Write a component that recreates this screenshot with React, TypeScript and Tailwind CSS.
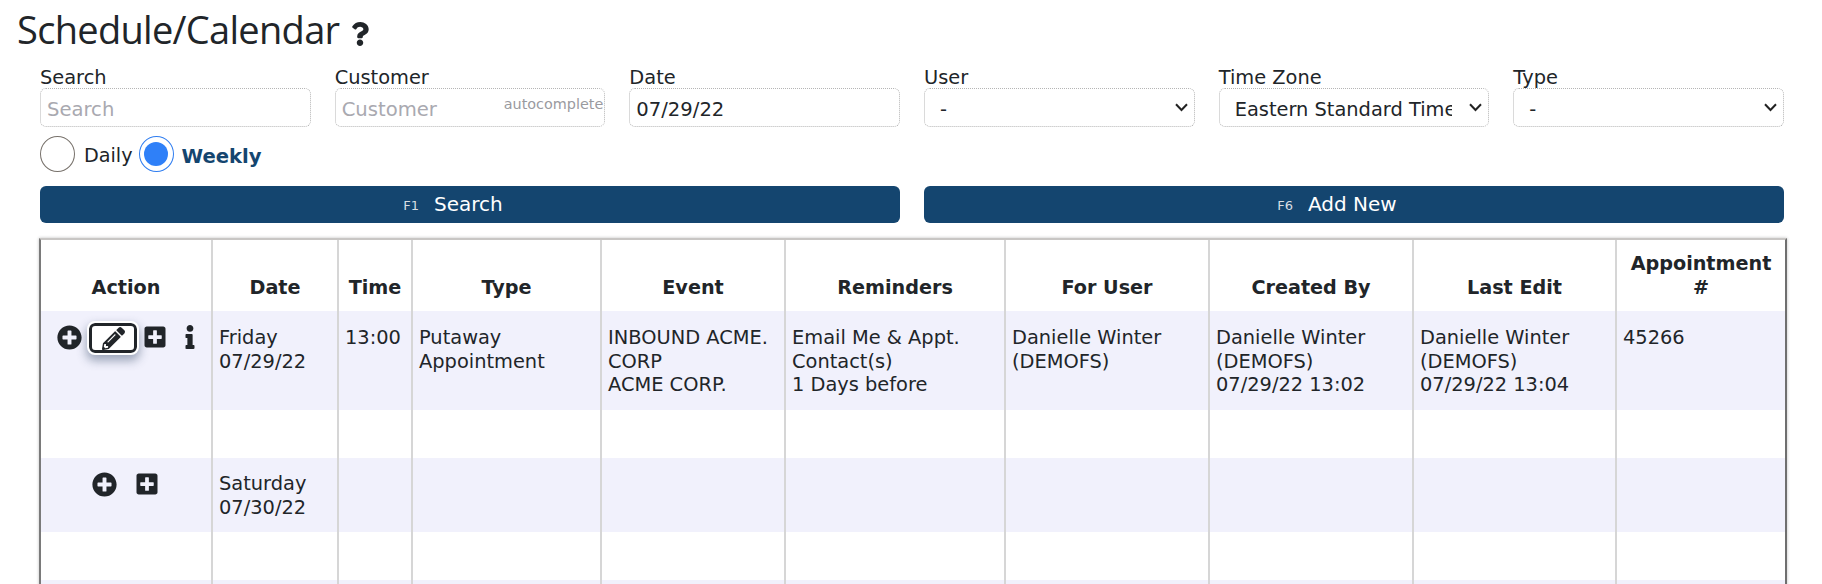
import React from "react";
import { FaQuestion, FaPlusCircle, FaPlusSquare, FaInfo, FaPencilAlt } from "react-icons/fa";

const colWidths = [170, 126, 74, 189, 184, 220, 204, 204, 203, 170];
const headers: React.ReactNode[] = [
  "Action", "Date", "Time", "Type", "Event", "Reminders", "For User", "Created By", "Last Edit",
  <>Appointment<br />#</>,
];

const Field = ({ label, children }: { label: string; children: React.ReactNode }) => (
  <div className="flex flex-col">
    <label className="text-[19.4px] leading-[25px] h-[23px] text-[#212529]">{label}</label>
    {children}
  </div>
);

const boxCls = "h-[39px] w-full rounded-[6px] border border-dotted border-[#b5b5b5] bg-white pl-[6px] pr-[5px] pt-[3px] text-[19.6px] text-[#212529] placeholder:text-[#a9a9b0] outline-none";

const Sel = ({ value }: { value: string }) => (
  <div className="relative">
    <select
      defaultValue={value}
      className="appearance-none h-[39px] w-full rounded-[6px] border border-dotted border-[#b5b5b5] bg-white pl-[15px] pr-[36px] pt-[5px] text-[19.4px] text-[#212529] outline-none"
    >
      <option value={value}>{value}</option>
    </select>
    <svg className="absolute right-[7px] top-[15px] pointer-events-none" width="13" height="9" viewBox="0 0 13 9" fill="none">
      <path d="M1 1.2 L6.5 7 L12 1.2" stroke="#222" strokeWidth="2" />
    </svg>
  </div>
);

const Cell = ({ children, className = "" }: { children?: React.ReactNode; className?: string }) => (
  <td className={"border-l-2 border-[#d6d6d6] first:border-l-0 align-top pl-[6px] pr-[2px] pt-[14px] pb-[12px] text-[19.4px] leading-[23.5px] text-[#212529] " + className}>
    {children}
  </td>
);

const Blank = () => (
  <tr className="h-[48px] bg-white">
    {colWidths.map((_, i) => (
      <td key={i} className="border-l-2 border-[#d6d6d6] first:border-l-0" />
    ))}
  </tr>
);

export default function App() {
  return (
    <div className="h-[584px] w-[1822px] overflow-hidden bg-white font-['DejaVu_Sans',sans-serif]">
      <h1 className="flex items-center pl-[17px] h-[60px] text-[38px] leading-[56px] text-[#212529] font-['Open_Sans',sans-serif] tracking-[-0.7px]">
        <span className="-mt-[2px]">Schedule/Calendar</span>
        <FaQuestion className="ml-[9px] mt-[7px] text-[24px]" />
      </h1>

      <div className="ml-[40px] w-[1744px] pt-[5px]">
        <div className="grid grid-cols-6 gap-x-[24px]">
          <Field label="Search">
            <input className={boxCls} placeholder="Search" readOnly />
          </Field>
          <Field label="Customer">
            <div className="relative">
              <input className={boxCls} placeholder="Customer" readOnly />
              <span className="absolute right-[2px] top-[6px] text-[14.4px] leading-[20px] text-[#9a9a9f]">autocomplete</span>
            </div>
          </Field>
          <Field label="Date">
            <input className={boxCls} defaultValue="07/29/22" readOnly />
          </Field>
          <Field label="User">
            <Sel value="-" />
          </Field>
          <Field label="Time Zone">
            <Sel value="Eastern Standard Time" />
          </Field>
          <Field label="Type">
            <Sel value="-" />
          </Field>
        </div>

        <div className="flex items-center mt-[9px] h-[36px] text-[19.2px]">
          <span className="h-[36px] w-[35px] rounded-[50%] border border-[#77716b] bg-white" />
          <span className="ml-[9px] pt-[5px] text-[#212529]">Daily</span>
          <span className="ml-[6px] h-[36px] w-[35px] rounded-[50%] border border-[#2f7df0] bg-white flex items-center justify-center">
            <span className="h-[24px] w-[24px] rounded-[50%] bg-[#2f80f8]" />
          </span>
          <span className="ml-[8px] pt-[5px] text-[19.6px] font-bold text-[#14456f]">Weekly</span>
        </div>

        <div className="grid grid-cols-2 gap-x-[24px] mt-[14px]">
          <button className="h-[37px] rounded-[6px] bg-[#14456f] text-white text-[20px] flex items-center justify-center pr-[34px] pb-[2px]">
            <span className="text-[13px] text-[#d8dde3] mr-[15px] mt-[5px]">F1</span>Search
          </button>
          <button className="h-[37px] rounded-[6px] bg-[#14456f] text-white text-[20px] flex items-center justify-center pr-[34px] pb-[2px]">
            <span className="text-[13px] text-[#d8dde3] mr-[15px] mt-[5px]">F6</span>Add New
          </button>
        </div>

        <div className="mt-[15px] -ml-[1px] w-[1748px] border-t-2 border-t-[#c8c6c4] border-l-2 border-l-[#7a7a7a] border-r-2 border-r-[#6f6f6f] shadow-[0_0_3px_rgba(0,0,0,0.25)]">
          <table className="w-full table-fixed border-separate border-spacing-0">
            <colgroup>
              {colWidths.map((w, i) => (
                <col key={i} style={{ width: w }} />
              ))}
            </colgroup>
            <thead>
              <tr className="h-[71px] bg-white">
                {headers.map((h, i) => (
                  <th key={i} className="border-l-2 border-[#d6d6d6] first:border-l-0 align-bottom text-center pb-[12px] px-[2px] text-[19.2px] leading-[23.4px] font-bold text-[#212529]">
                    {h}
                  </th>
                ))}
              </tr>
            </thead>
            <tbody>
              <tr className="bg-[#f1f1fc] h-[99px]">
                <Cell className="pt-[15px]">
                  <div className="flex items-center h-[24px] pl-[10px] -mt-[1px]">
                    <FaPlusCircle className="shrink-0 text-[25px] text-[#212529]" />
                    <span className="ml-[7px] mt-[2px] h-[30px] w-[48px] shrink-0 rounded-[6px] border-[3px] border-[#212529] bg-white outline-2 outline-white shadow-[0_5px_10px_3px_rgba(60,80,110,0.45)] flex items-center justify-center">
                      <FaPencilAlt className="text-[23px] text-[#212529]" />
                    </span>
                    <FaPlusSquare className="shrink-0 ml-[6px] text-[24px] text-[#212529]" />
                    <FaInfo className="shrink-0 ml-[11px] text-[24px] text-[#212529]" />
                  </div>
                </Cell>
                <Cell className="pt-[15px]">Friday<br />07/29/22</Cell>
                <Cell className="pt-[15px]">13:00</Cell>
                <Cell className="pt-[15px]">Putaway<br />Appointment</Cell>
                <Cell className="pt-[15px]">INBOUND ACME. CORP<br />ACME CORP.</Cell>
                <Cell className="pt-[15px]">Email Me &amp; Appt. Contact(s)<br />1 Days before</Cell>
                <Cell className="pt-[15px]">Danielle Winter (DEMOFS)</Cell>
                <Cell className="pt-[15px]">Danielle Winter (DEMOFS)<br />07/29/22 13:02</Cell>
                <Cell className="pt-[15px]">Danielle Winter (DEMOFS)<br />07/29/22 13:04</Cell>
                <Cell className="pt-[15px]">45266</Cell>
              </tr>
              <Blank />
              <tr className="bg-[#f1f1fc] h-[74px]">
                <Cell>
                  <div className="flex items-center gap-[18px] h-[24px] pl-[45px]">
                    <FaPlusCircle className="shrink-0 text-[25px] text-[#212529]" />
                    <FaPlusSquare className="shrink-0 text-[24px] text-[#212529]" />
                  </div>
                </Cell>
                <Cell>Saturday<br />07/30/22</Cell>
                <Cell /><Cell /><Cell /><Cell /><Cell /><Cell /><Cell /><Cell />
              </tr>
              <Blank />
              <tr className="bg-[#f1f1fc] h-[74px]">
                <Cell /><Cell /><Cell /><Cell /><Cell /><Cell /><Cell /><Cell /><Cell /><Cell />
              </tr>
            </tbody>
          </table>
        </div>
      </div>
    </div>
  );
}
